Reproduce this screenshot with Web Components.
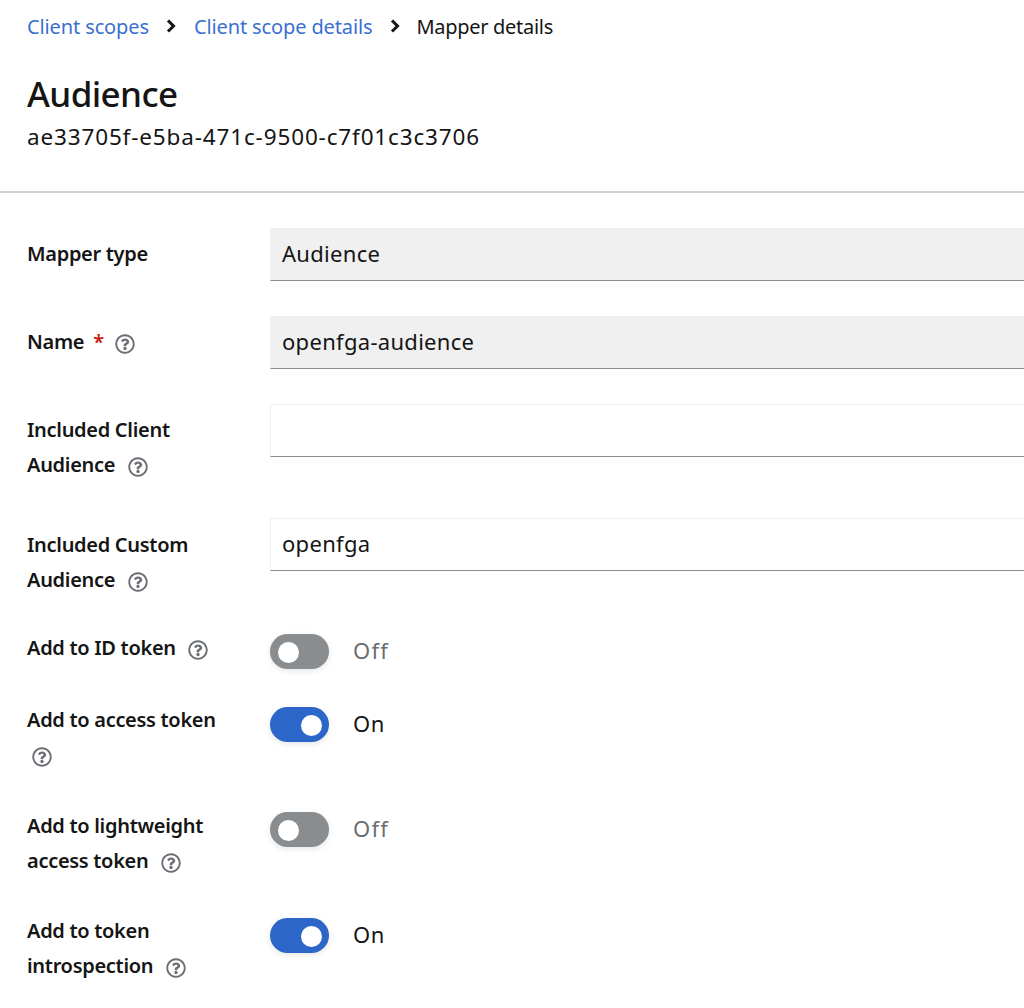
<!doctype html>
<html><head><meta charset="utf-8"><style>
html,body{margin:0;background:#fff;overflow:hidden}
body{width:1024px;height:1008px;font-family:"Noto Sans","Liberation Sans",sans-serif;color:#151515}
</style></head><body>
<template id="t-help"><style>:host{display:inline-flex;vertical-align:-5px;margin-left:var(--ml,6px)}svg{width:20px;height:20px;fill:#6a6e73;display:block}</style>
<svg viewBox="0 0 512 512"><path d="M256 8C119.043 8 8 119.083 8 256c0 136.997 111.043 248 248 248s248-111.003 248-248C504 119.083 392.957 8 256 8zm0 448c-110.532 0-200-89.431-200-200 0-110.495 89.472-200 200-200 110.491 0 200 89.471 200 200 0 110.53-89.431 200-200 200zm107.244-255.2c0 67.052-72.421 68.084-72.421 92.863V300c0 6.627-5.373 12-12 12h-45.647c-6.627 0-12-5.373-12-12v-8.659c0-35.745 27.1-50.034 47.579-61.516 17.561-9.845 28.324-16.541 28.324-29.579 0-17.246-21.999-28.693-39.784-28.693-23.189 0-33.894 10.977-48.942 29.969-4.057 5.12-11.46 6.071-16.666 2.124l-27.824-21.098c-5.107-3.872-6.251-11.066-2.644-16.363C184.846 131.491 214.94 112 261.794 112c49.071 0 101.45 38.304 101.45 88.8zM298 368c0 23.159-18.841 42-42 42s-42-18.841-42-42 18.841-42 42-42 42 18.841 42 42z"/></svg></template>

<template id="t-crumbs"><style>
:host{display:flex;align-items:center;height:30px;padding:11px 0 1px 27px;font-size:20px;letter-spacing:-.12px}
::slotted(a){color:#3a70cf;text-decoration:none}
::slotted(span){letter-spacing:-.3px;margin-left:-1px}
svg{width:10px;height:14px;margin:0 18px 0 17px;fill:none;stroke:#151515;stroke-width:3}
</style><slot name="a"></slot><svg viewBox="0 0 10 14"><path d="M2 1.5 7.5 7 2 12.5"/></svg><slot name="b"></slot><svg viewBox="0 0 10 14"><path d="M2 1.5 7.5 7 2 12.5"/></svg><slot name="c"></slot></template>

<template id="t-head"><style>
:host{display:block;padding:0 0 0 27px;border-bottom:2px solid #d2d2d2;height:149px;box-sizing:content-box}
h1{margin:0;padding-top:29px;font-size:35px;line-height:46px;font-weight:500;letter-spacing:-.6px}
p{margin:0;padding-top:5px;font-size:22.5px;line-height:30px;letter-spacing:.85px}
</style><h1><slot name="title"></slot></h1><p><slot name="sub"></slot></p></template>

<template id="t-row"><style>
:host{display:grid;grid-template-columns:243px 1fr;margin-top:var(--mt,35px)}
.l{font-size:20px;font-weight:600;line-height:35px;padding-top:var(--lt,8px);letter-spacing:-.3px}
.c{min-width:0}
</style><div class="l"><slot name="label"></slot></div><div class="c"><slot></slot></div></template>

<template id="t-input"><style>
:host{display:block;height:53px;box-sizing:border-box;border:1px solid #f0f0f0;border-bottom:1px solid #8a8d90;background:#fff;font-size:22px;line-height:49px;padding-left:11px;width:800px;letter-spacing:.3px}
:host([readonly]){background:#f0f0f0;border-color:#f0f0f0;border-bottom-color:#8a8d90}
</style><slot></slot></template>

<template id="t-switch"><style>
:host{display:flex;align-items:center;font-size:22px;color:#6a6e73;height:35px;letter-spacing:1.2px}
:host([on]){color:#151515;letter-spacing:.6px}
.t{width:59px;height:35px;border-radius:18px;background:#8a8d90;position:relative;margin-right:24px;box-shadow:0 2px 6px rgba(0,0,0,.1)}
:host([on]) .t{background:#2b66c8}
.k{position:absolute;top:8px;left:8px;width:21px;height:21px;border-radius:50%;background:#fff}
:host([on]) .k{left:31px}
.x{position:relative;top:-2px}
</style><span class="t"><span class="k"></span></span><span class="x"><slot></slot></span></template>

<template id="t-form"><style>:host{display:block;padding:1px 0 0 27px}</style><slot></slot></template>

<kc-crumbs>
 <a slot="a" href="#">Client scopes</a><a slot="b" href="#">Client scope details</a><span slot="c">Mapper details</span>
</kc-crumbs>
<kc-head><span slot="title">Audience</span><span slot="sub">ae33705f-e5ba-471c-9500-c7f01c3c3706</span></kc-head>
<kc-form>
 <kc-row style="--mt:34px"><span slot="label">Mapper type</span><kc-input readonly>Audience</kc-input></kc-row>
 <kc-row><span slot="label">Name <span style="color:#c9190b;margin-left:4px">*</span><kc-help style="--ml:11px"></kc-help></span><kc-input readonly>openfga-audience</kc-input></kc-row>
 <kc-row><span slot="label">Included Client<br>Audience<kc-help style="--ml:13px"></kc-help></span><kc-input></kc-input></kc-row>
 <kc-row style="--lt:9px;--mt:36px"><span slot="label">Included Custom<br>Audience<kc-help style="--ml:13px"></kc-help></span><kc-input>openfga</kc-input></kc-row>
 <kc-row style="--mt:33px;--lt:0px"><span slot="label">Add to ID token<kc-help style="--ml:12px"></kc-help></span><kc-switch style="margin-top:4px">Off</kc-switch></kc-row>
 <kc-row style="--mt:33px;--lt:0px"><span slot="label">Add to access token<br><kc-help style="--ml:5px"></kc-help></span><kc-switch on style="margin-top:5px">On</kc-switch></kc-row>
 <kc-row style="--mt:36px;--lt:0px"><span slot="label">Add to lightweight<br>access token<kc-help style="--ml:13px"></kc-help></span><kc-switch style="margin-top:4px">Off</kc-switch></kc-row>
 <kc-row style="--mt:35px;--lt:0px"><span slot="label">Add to token<br>introspection<kc-help style="--ml:13px"></kc-help></span><kc-switch on style="margin-top:5px">On</kc-switch></kc-row>
</kc-form>
<script>
for (const [n,id] of [['kc-help','t-help'],['kc-crumbs','t-crumbs'],['kc-head','t-head'],['kc-row','t-row'],['kc-input','t-input'],['kc-switch','t-switch'],['kc-form','t-form']]) {
  customElements.define(n, class extends HTMLElement{constructor(){super();this.attachShadow({mode:'open'}).append(document.getElementById(id).content.cloneNode(true))}});
}
</script>
</body></html>
